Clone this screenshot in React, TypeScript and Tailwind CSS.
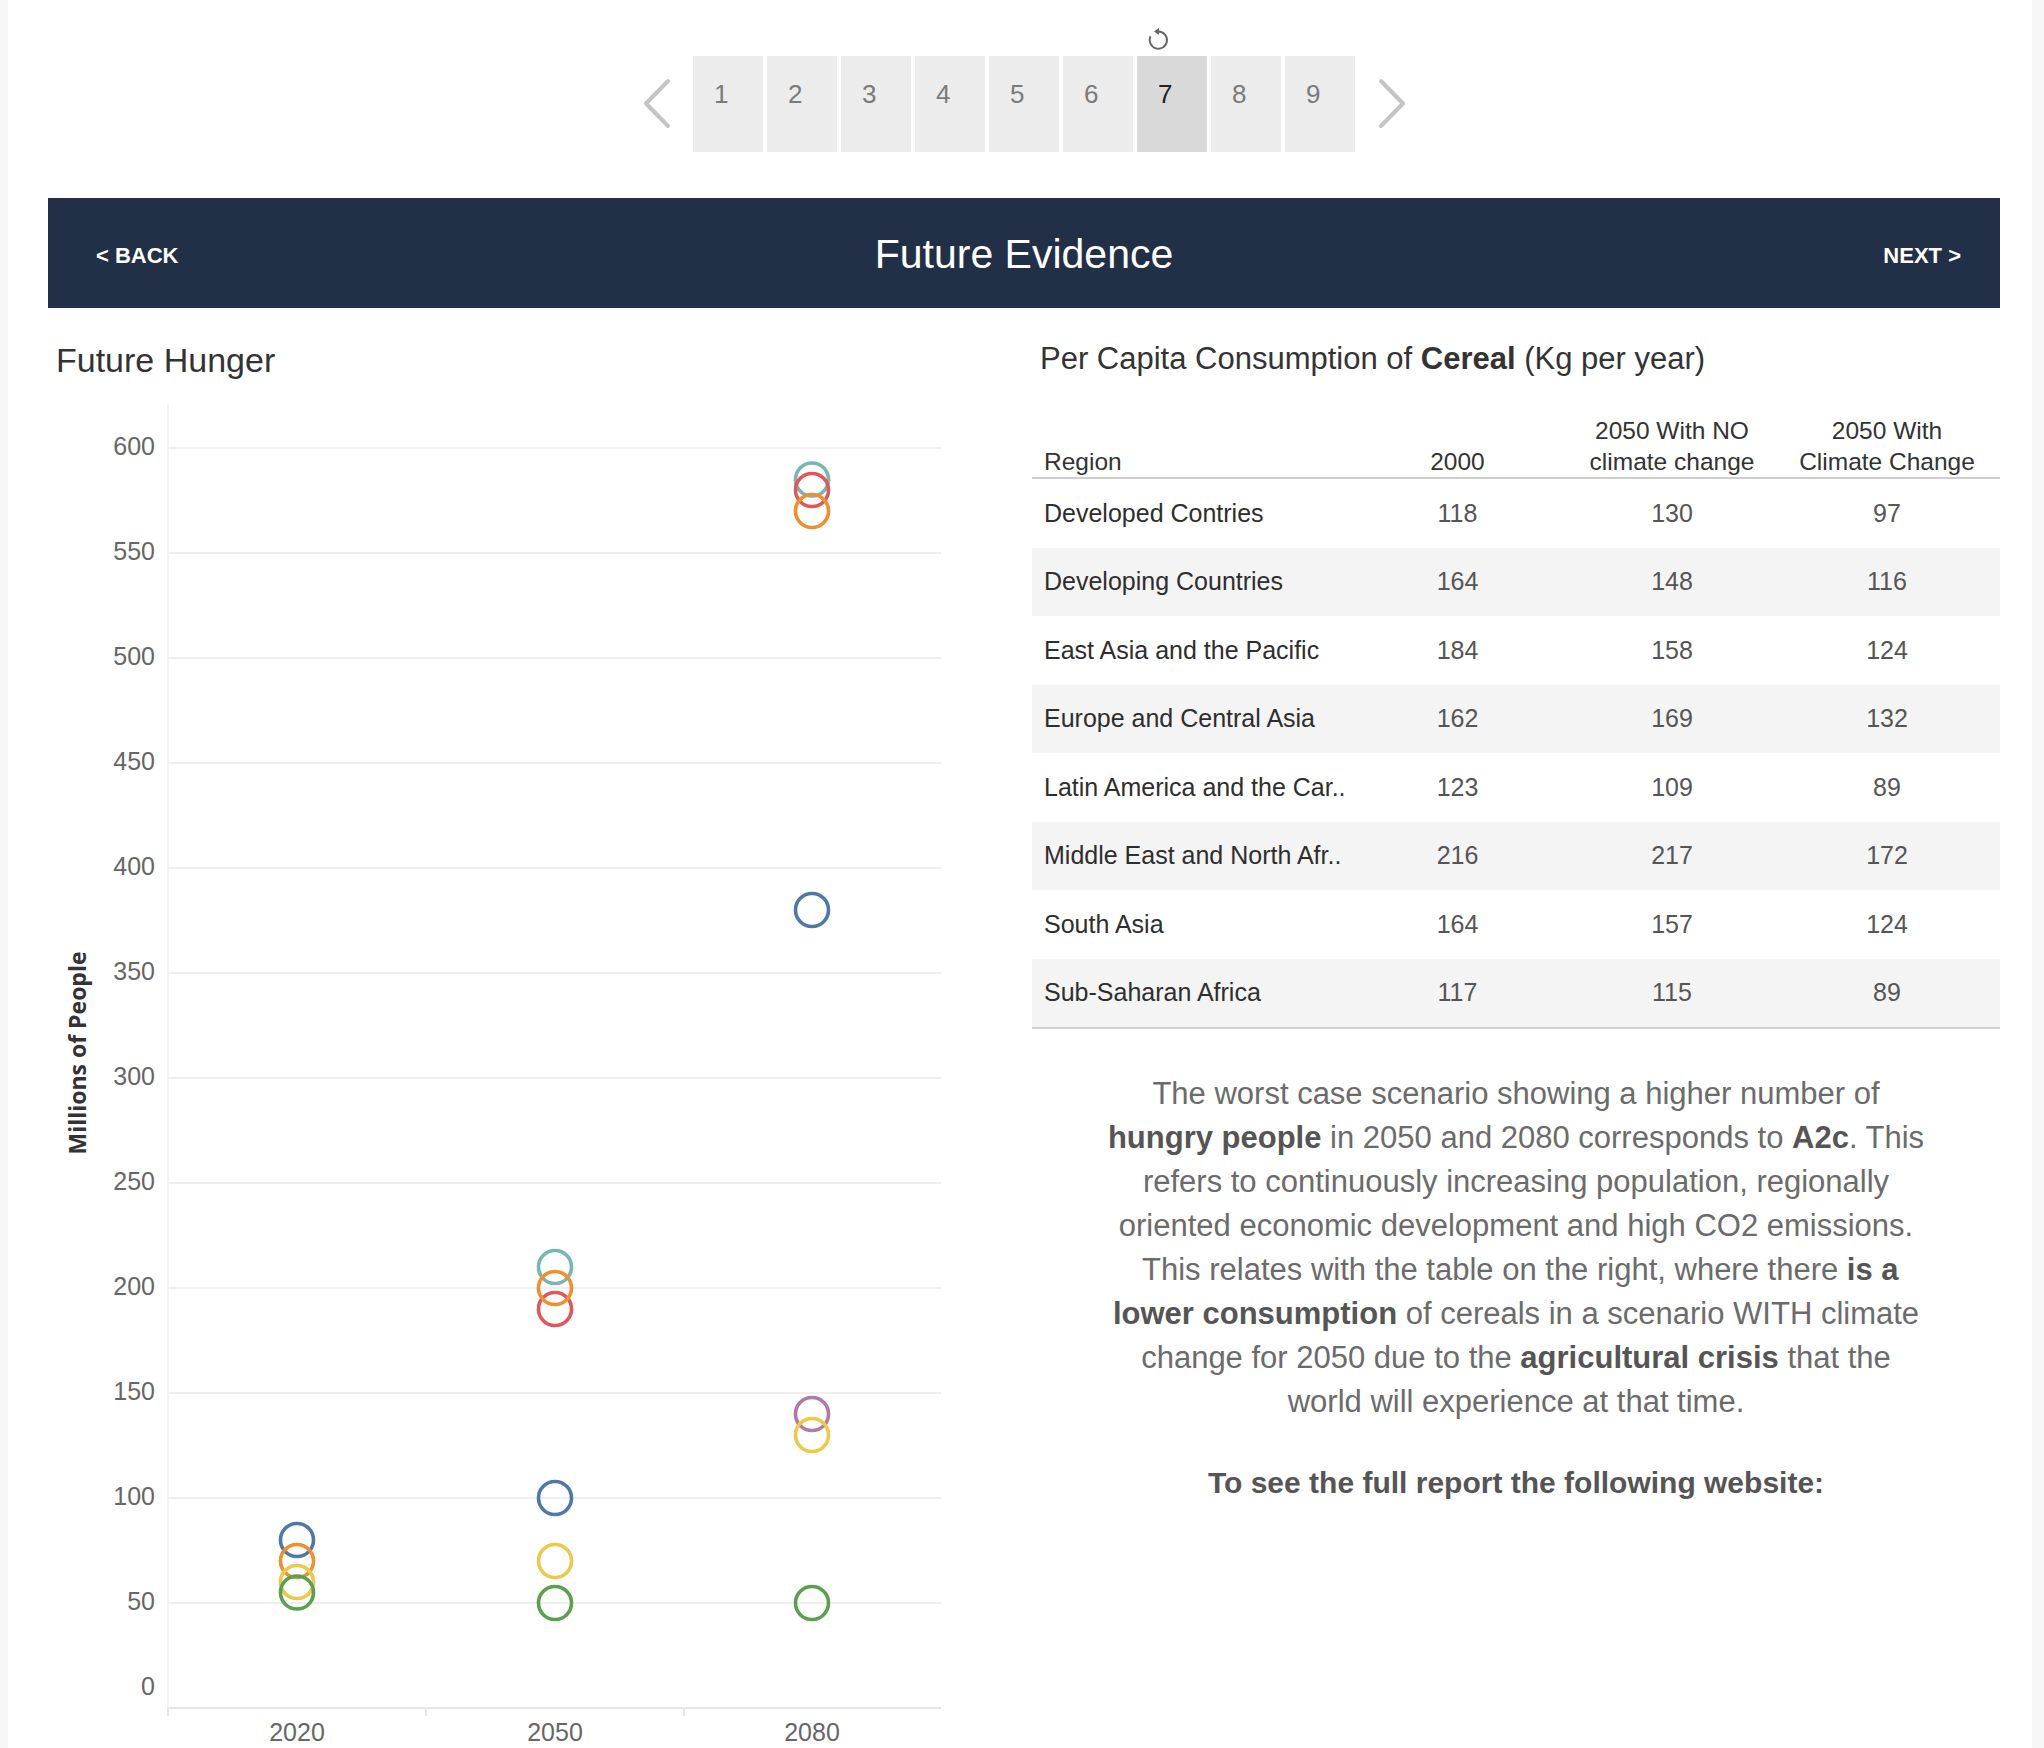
import React from "react";

// Tableau 10 palette used by the scatter marks
const SERIES = [
  { color: "#4e79a7", values: [80, 100, 380] },
  { color: "#76b7b2", values: [null, 210, 585] },
  { color: "#e15759", values: [null, 190, 580] },
  { color: "#f28e2b", values: [70, 200, 570] },
  { color: "#b07aa1", values: [null, null, 140] },
  { color: "#edc948", values: [60, 70, 130] },
  { color: "#59a14f", values: [55, 50, 50] },
];

const YEARS = ["2020", "2050", "2080"];
const COL_X = [297, 555, 812];
const TICKS = [0, 50, 100, 150, 200, 250, 300, 350, 400, 450, 500, 550, 600];

const ROWS: [string, number, number, number][] = [
  ["Developed Contries", 118, 130, 97],
  ["Developing Countries", 164, 148, 116],
  ["East Asia and the Pacific", 184, 158, 124],
  ["Europe and Central Asia", 162, 169, 132],
  ["Latin America and the Car..", 123, 109, 89],
  ["Middle East and North Afr..", 216, 217, 172],
  ["South Asia", 164, 157, 124],
  ["Sub-Saharan Africa", 117, 115, 89],
];

const y = (v: number) => 1708 - v * 2.1;

function Chevron({ dir }: { dir: "left" | "right" }) {
  return (
    <svg width="28" height="51" viewBox="0 0 28 51" className="mt-[22px] shrink-0">
      <polyline
        points={dir === "left" ? "25,3 3,25.5 25,48" : "3,3 25,25.5 3,48"}
        fill="none"
        stroke="#c4c4c4"
        strokeWidth="4"
        strokeLinecap="round"
        strokeLinejoin="round"
      />
    </svg>
  );
}

function Pager() {
  return (
    <div className="relative h-[198px]">
      <svg
        className="absolute left-[1137px] top-[26px]"
        width="26"
        height="26"
        viewBox="0 0 24 24"
      >
        <path d="M12.5 5 A8 8 0 1 1 5.1 9.5" fill="none" stroke="#666" strokeWidth="1.8" />
        <polygon points="8.3,5 13,1.6 13,8.4" fill="#666" />
      </svg>
      <div className="flex items-start pl-[635px] pt-[56px]">
        <Chevron dir="left" />
        <div className="ml-[22px] flex gap-[4px]">
          {[1, 2, 3, 4, 5, 6, 7, 8, 9].map((n) => (
            <div
              key={n}
              className={
                n === 7
                  ? "h-[96px] w-[70px] bg-[#d9d9d9] pl-[21px] pt-[22px] text-[26px] leading-[32px] text-[#222]"
                  : "h-[96px] w-[70px] bg-[#ececec] pl-[21px] pt-[22px] text-[26px] leading-[32px] text-[#7a7a7a]"
              }
            >
              {n}
            </div>
          ))}
        </div>
        <div className="ml-[23px]">
          <Chevron dir="right" />
        </div>
      </div>
    </div>
  );
}

function HungerChart() {
  return (
    <svg width="952" height="1358" viewBox="48 390 952 1358" className="block">
      <line x1="168" y1="404" x2="168" y2="1708" stroke="#f0f0f0" strokeWidth="1.5" />
      {TICKS.map((t) => (
        <g key={t}>
          {t > 0 && (
            <line x1="168" y1={y(t)} x2="941" y2={y(t)} stroke="#efefef" strokeWidth="2" />
          )}
          <text
            x="155"
            y={t === 0 ? 1688 : y(t)}
            textAnchor="end"
            dominantBaseline="middle"
            fontSize="25"
            fill="#666"
            fontFamily="'Liberation Sans', Arial, sans-serif"
          >
            {t}
          </text>
        </g>
      ))}
      <line x1="168" y1="1708" x2="941" y2="1708" stroke="#e6e6e6" strokeWidth="2" />
      {[168, 426, 684].map((x) => (
        <line key={x} x1={x} y1="1708" x2={x} y2="1716" stroke="#e6e6e6" strokeWidth="2" />
      ))}
      {YEARS.map((yr, i) => (
        <text
          key={yr}
          x={COL_X[i]}
          y="1734"
          textAnchor="middle"
          dominantBaseline="middle"
          fontSize="25"
          fill="#666"
          fontFamily="'Liberation Sans', Arial, sans-serif"
        >
          {yr}
        </text>
      ))}
      <text
        x="80"
        y="1053"
        transform="rotate(-90 80 1053)"
        textAnchor="middle"
        dominantBaseline="middle"
        fontSize="23"
        fontWeight="700"
        fill="#333"
        fontFamily="'Open Sans', 'Liberation Sans', sans-serif"
      >
        Millions of People
      </text>
      {SERIES.map((s) =>
        s.values.map((v, i) =>
          v === null ? null : (
            <circle
              key={s.color + i}
              cx={COL_X[i]}
              cy={y(v)}
              r="16.5"
              fill="none"
              stroke={s.color}
              strokeWidth="3.6"
            />
          )
        )
      )}
    </svg>
  );
}

function CerealTable() {
  return (
    <div className="mt-[34px] w-[968px]">
      <div className="grid h-[68px] grid-cols-[338px_175px_254px_176px_1fr] items-end whitespace-nowrap border-b-2 border-[#cfcfcf] text-[24.5px] leading-[31px] text-[#333]">
        <div className="pl-[12px]">Region</div>
        <div className="text-center">2000</div>
        <div className="text-center">
          2050 With NO
          <br />
          climate change
        </div>
        <div className="text-center">
          2050 With
          <br />
          Climate Change
        </div>
        <div />
      </div>
      <div className="border-b-2 border-[#cfcfcf]">
        {ROWS.map((r, i) => (
          <div
            key={r[0]}
            className={
              i % 2 === 1
                ? "grid h-[68.5px] grid-cols-[338px_175px_254px_176px_1fr] items-center whitespace-nowrap bg-[#f4f4f4] text-[25px]"
                : "grid h-[68.5px] grid-cols-[338px_175px_254px_176px_1fr] items-center whitespace-nowrap text-[25px]"
            }
          >
            <div className="pl-[12px] text-[#2e2e2e]">{r[0]}</div>
            <div className="text-center text-[#555]">{r[1]}</div>
            <div className="text-center text-[#555]">{r[2]}</div>
            <div className="text-center text-[#555]">{r[3]}</div>
            <div />
          </div>
        ))}
      </div>
    </div>
  );
}

function Summary() {
  const b = "font-bold text-[#555]";
  return (
    <div className="mt-[43px] w-[968px] whitespace-nowrap text-center text-[31px] leading-[44px] text-[#6b6b6b]">
      <div>The worst case scenario showing a higher number of</div>
      <div>
        <span className={b}>hungry people</span> in 2050 and 2080 corresponds to{" "}
        <span className={b}>A2c</span>. This
      </div>
      <div>refers to continuously increasing population, regionally</div>
      <div>oriented economic development and high CO2 emissions.</div>
      <div>
        &nbsp;This relates with the table on the right, where there <span className={b}>is a</span>
      </div>
      <div>
        <span className={b}>lower consumption</span> of cereals in a scenario WITH climate
      </div>
      <div>
        change for 2050 due to the <span className={b}>agricultural crisis</span> that the
      </div>
      <div>world will experience at that time.</div>
      <div className="mt-[37px] text-[30px] font-bold text-[#555]">
        To see the full report the following website:
      </div>
    </div>
  );
}

export default function App() {
  return (
    <div
      className="flex h-[1748px] w-[2044px] overflow-hidden bg-white"
      style={{ fontFamily: "'Liberation Sans', Arial, sans-serif" }}
    >
      <div className="w-[8px] shrink-0 bg-[#f7f7f7]" />
      <div className="flex-1">
        <Pager />
        <div className="ml-[40px] mr-[32px] grid h-[110px] grid-cols-[1fr_auto_1fr] items-center bg-[#223047] px-[48px] pt-[4px] text-white">
          <div className="text-[22px] font-bold">&lt; BACK</div>
          <div className="text-[41px]">Future Evidence</div>
          <div className="text-right text-[22px] font-bold">
            <span className="mr-[-9px]">NEXT &gt;</span>
          </div>
        </div>
        <div className="ml-[40px] flex">
          <div className="w-[952px] shrink-0">
            <div className="pl-[8px] pt-[33px] text-[34px] leading-[38px] text-[#333]">Future Hunger</div>
            <div className="mt-[11px]">
              <HungerChart />
            </div>
          </div>
          <div className="ml-[32px] w-[968px]">
            <div className="pl-[8px] pt-[33px] text-[31px] leading-[36px] text-[#333]">
              Per Capita Consumption of <span className="font-bold">Cereal</span> (Kg per year)
            </div>
            <CerealTable />
            <Summary />
          </div>
        </div>
      </div>
      <div className="w-[12px] shrink-0 bg-[#f7f7f7]" />
    </div>
  );
}
